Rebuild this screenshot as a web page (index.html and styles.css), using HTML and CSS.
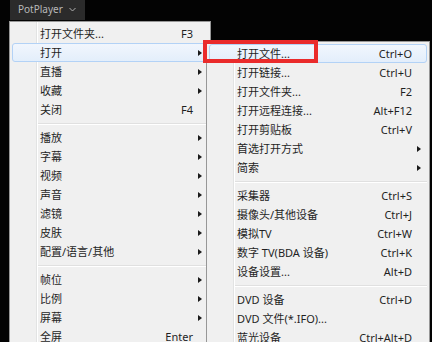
FILE: index.html
```html
<!DOCTYPE html>
<html lang="zh-CN">
<head>
<meta charset="utf-8">
<title>PotPlayer 菜单</title>
<link rel="stylesheet" href="styles.css">
</head>
<body>
<div class="bar">
  <div class="tab">
    <span class="tab-title">PotPlayer</span>
    <svg class="chev" width="7" height="5" viewBox="0 0 7 5"><polyline points="0.5,1 3.5,4 6.5,1" fill="none" stroke="#b0b0b0" stroke-width="1"/></svg>
  </div>
</div>
<div class="stage">
  <div class="menu main">
    <div class="item"><span class="label">打开文件夹...</span><span class="key">F3</span><span></span></div>
    <div class="item hot"><span class="label">打开</span><span class="key"></span><span class="arrow"></span></div>
    <div class="item"><span class="label">直播</span><span class="key"></span><span class="arrow"></span></div>
    <div class="item"><span class="label">收藏</span><span class="key"></span><span class="arrow"></span></div>
    <div class="item"><span class="label">关闭</span><span class="key">F4</span><span></span></div>
    <div class="sep"></div>
    <div class="item"><span class="label">播放</span><span class="key"></span><span class="arrow"></span></div>
    <div class="item"><span class="label">字幕</span><span class="key"></span><span class="arrow"></span></div>
    <div class="item"><span class="label">视频</span><span class="key"></span><span class="arrow"></span></div>
    <div class="item"><span class="label">声音</span><span class="key"></span><span class="arrow"></span></div>
    <div class="item"><span class="label">滤镜</span><span class="key"></span><span class="arrow"></span></div>
    <div class="item"><span class="label">皮肤</span><span class="key"></span><span class="arrow"></span></div>
    <div class="item"><span class="label">配置/语言/其他</span><span class="key"></span><span class="arrow"></span></div>
    <div class="sep"></div>
    <div class="item"><span class="label">帧位</span><span class="key"></span><span class="arrow"></span></div>
    <div class="item"><span class="label">比例</span><span class="key"></span><span class="arrow"></span></div>
    <div class="item"><span class="label">屏幕</span><span class="key"></span><span class="arrow"></span></div>
    <div class="item"><span class="label">全屏</span><span class="key">Enter</span><span></span></div>
  </div>

  <div class="menu sub">
    <div class="item hot"><span class="label">打开文件...</span><span class="key">Ctrl+O</span><span></span></div>
    <div class="item"><span class="label">打开链接...</span><span class="key">Ctrl+U</span><span></span></div>
    <div class="item"><span class="label">打开文件夹...</span><span class="key">F2</span><span></span></div>
    <div class="item"><span class="label">打开远程连接...</span><span class="key">Alt+F12</span><span></span></div>
    <div class="item"><span class="label">打开剪贴板</span><span class="key">Ctrl+V</span><span></span></div>
    <div class="item"><span class="label">首选打开方式</span><span class="key"></span><span class="arrow"></span></div>
    <div class="item"><span class="label">简索</span><span class="key"></span><span class="arrow"></span></div>
    <div class="sep"></div>
    <div class="item"><span class="label">采集器</span><span class="key">Ctrl+S</span><span></span></div>
    <div class="item"><span class="label">摄像头/其他设备</span><span class="key">Ctrl+J</span><span></span></div>
    <div class="item"><span class="label">模拟TV</span><span class="key">Ctrl+W</span><span></span></div>
    <div class="item"><span class="label">数字 TV(BDA 设备)</span><span class="key">Ctrl+K</span><span></span></div>
    <div class="item"><span class="label">设备设置...</span><span class="key">Alt+D</span><span></span></div>
    <div class="sep"></div>
    <div class="item"><span class="label">DVD 设备</span><span class="key">Ctrl+D</span><span></span></div>
    <div class="item"><span class="label">DVD 文件(*.IFO)...</span><span class="key"></span><span></span></div>
    <div class="item"><span class="label">蓝光设备</span><span class="key">Ctrl+Alt+D</span><span></span></div>
  </div>

  <div class="callout"></div>
</div>
</body>
</html>
```

FILE: styles.css
```css
* { box-sizing: border-box; }

html, body {
  margin: 0;
  height: 100%;
}

body {
  background: #030303;
  overflow: hidden;
  font-family: "Noto Sans", "Noto Sans CJK SC", sans-serif;
  font-size: 11px;
  color: #1f1f1f;
}

.bar {
  height: 21px;
  display: flex;
  padding-left: 10px;
  background: #030303;
}

.tab {
  width: 75px;
  height: 20px;
  background: #2b2b2b;
  display: flex;
  align-items: center;
  padding-left: 8px;
  gap: 6px;
}

.tab-title {
  font-size: 10px;
  color: #b9b9b9;
  line-height: 1;
  padding-bottom: 2px;
}

.chev {
  display: block;
  margin-bottom: 1px;
}

.stage {
  position: relative;
  padding-left: 9px;
}

.menu {
  background-color: #f0f0f0;
  background-image: linear-gradient(to right,
    transparent 26px, #e2e3e3 26px, #e2e3e3 27px,
    #ffffff 27px, #ffffff 28px, transparent 28px);
  border: 1px solid #979797;
  padding: 2px 0;
}

.main {
  width: 202px;
}

.sub {
  position: absolute;
  left: 206px;
  top: 20px;
  width: 224px;
  box-shadow: 2px 2px 2px rgba(0, 0, 0, 0.25);
}

.item {
  display: grid;
  grid-template-columns: 1fr auto 14px;
  align-items: center;
  height: 19px;
  line-height: 17px;
  margin: 0 2px;
  padding-left: 27px;
  border: 1px solid transparent;
  border-radius: 3px;
  white-space: nowrap;
}

.item.hot {
  border-color: #b3d2f6;
  background: linear-gradient(to bottom, #f1f6fd, #e3eefb);
}

.key {
  text-align: right;
}

.arrow {
  width: 0;
  height: 0;
  margin-left: 5px;
  border-top: 3.5px solid transparent;
  border-bottom: 3.5px solid transparent;
  border-left: 4px solid #1a1a1a;
}

.sep {
  height: 9px;
  margin-left: 28px;
  margin-right: 2px;
  display: flex;
  flex-direction: column;
  justify-content: center;
}

.sep::before {
  content: "";
  display: block;
  height: 1px;
  background: #e0e0e0;
}

.sep::after {
  content: "";
  display: block;
  height: 1px;
  background: #ffffff;
}

.callout {
  position: absolute;
  left: 203px;
  top: 19px;
  width: 115px;
  height: 23px;
  border: 4px solid #ea2b2b;
}
```
